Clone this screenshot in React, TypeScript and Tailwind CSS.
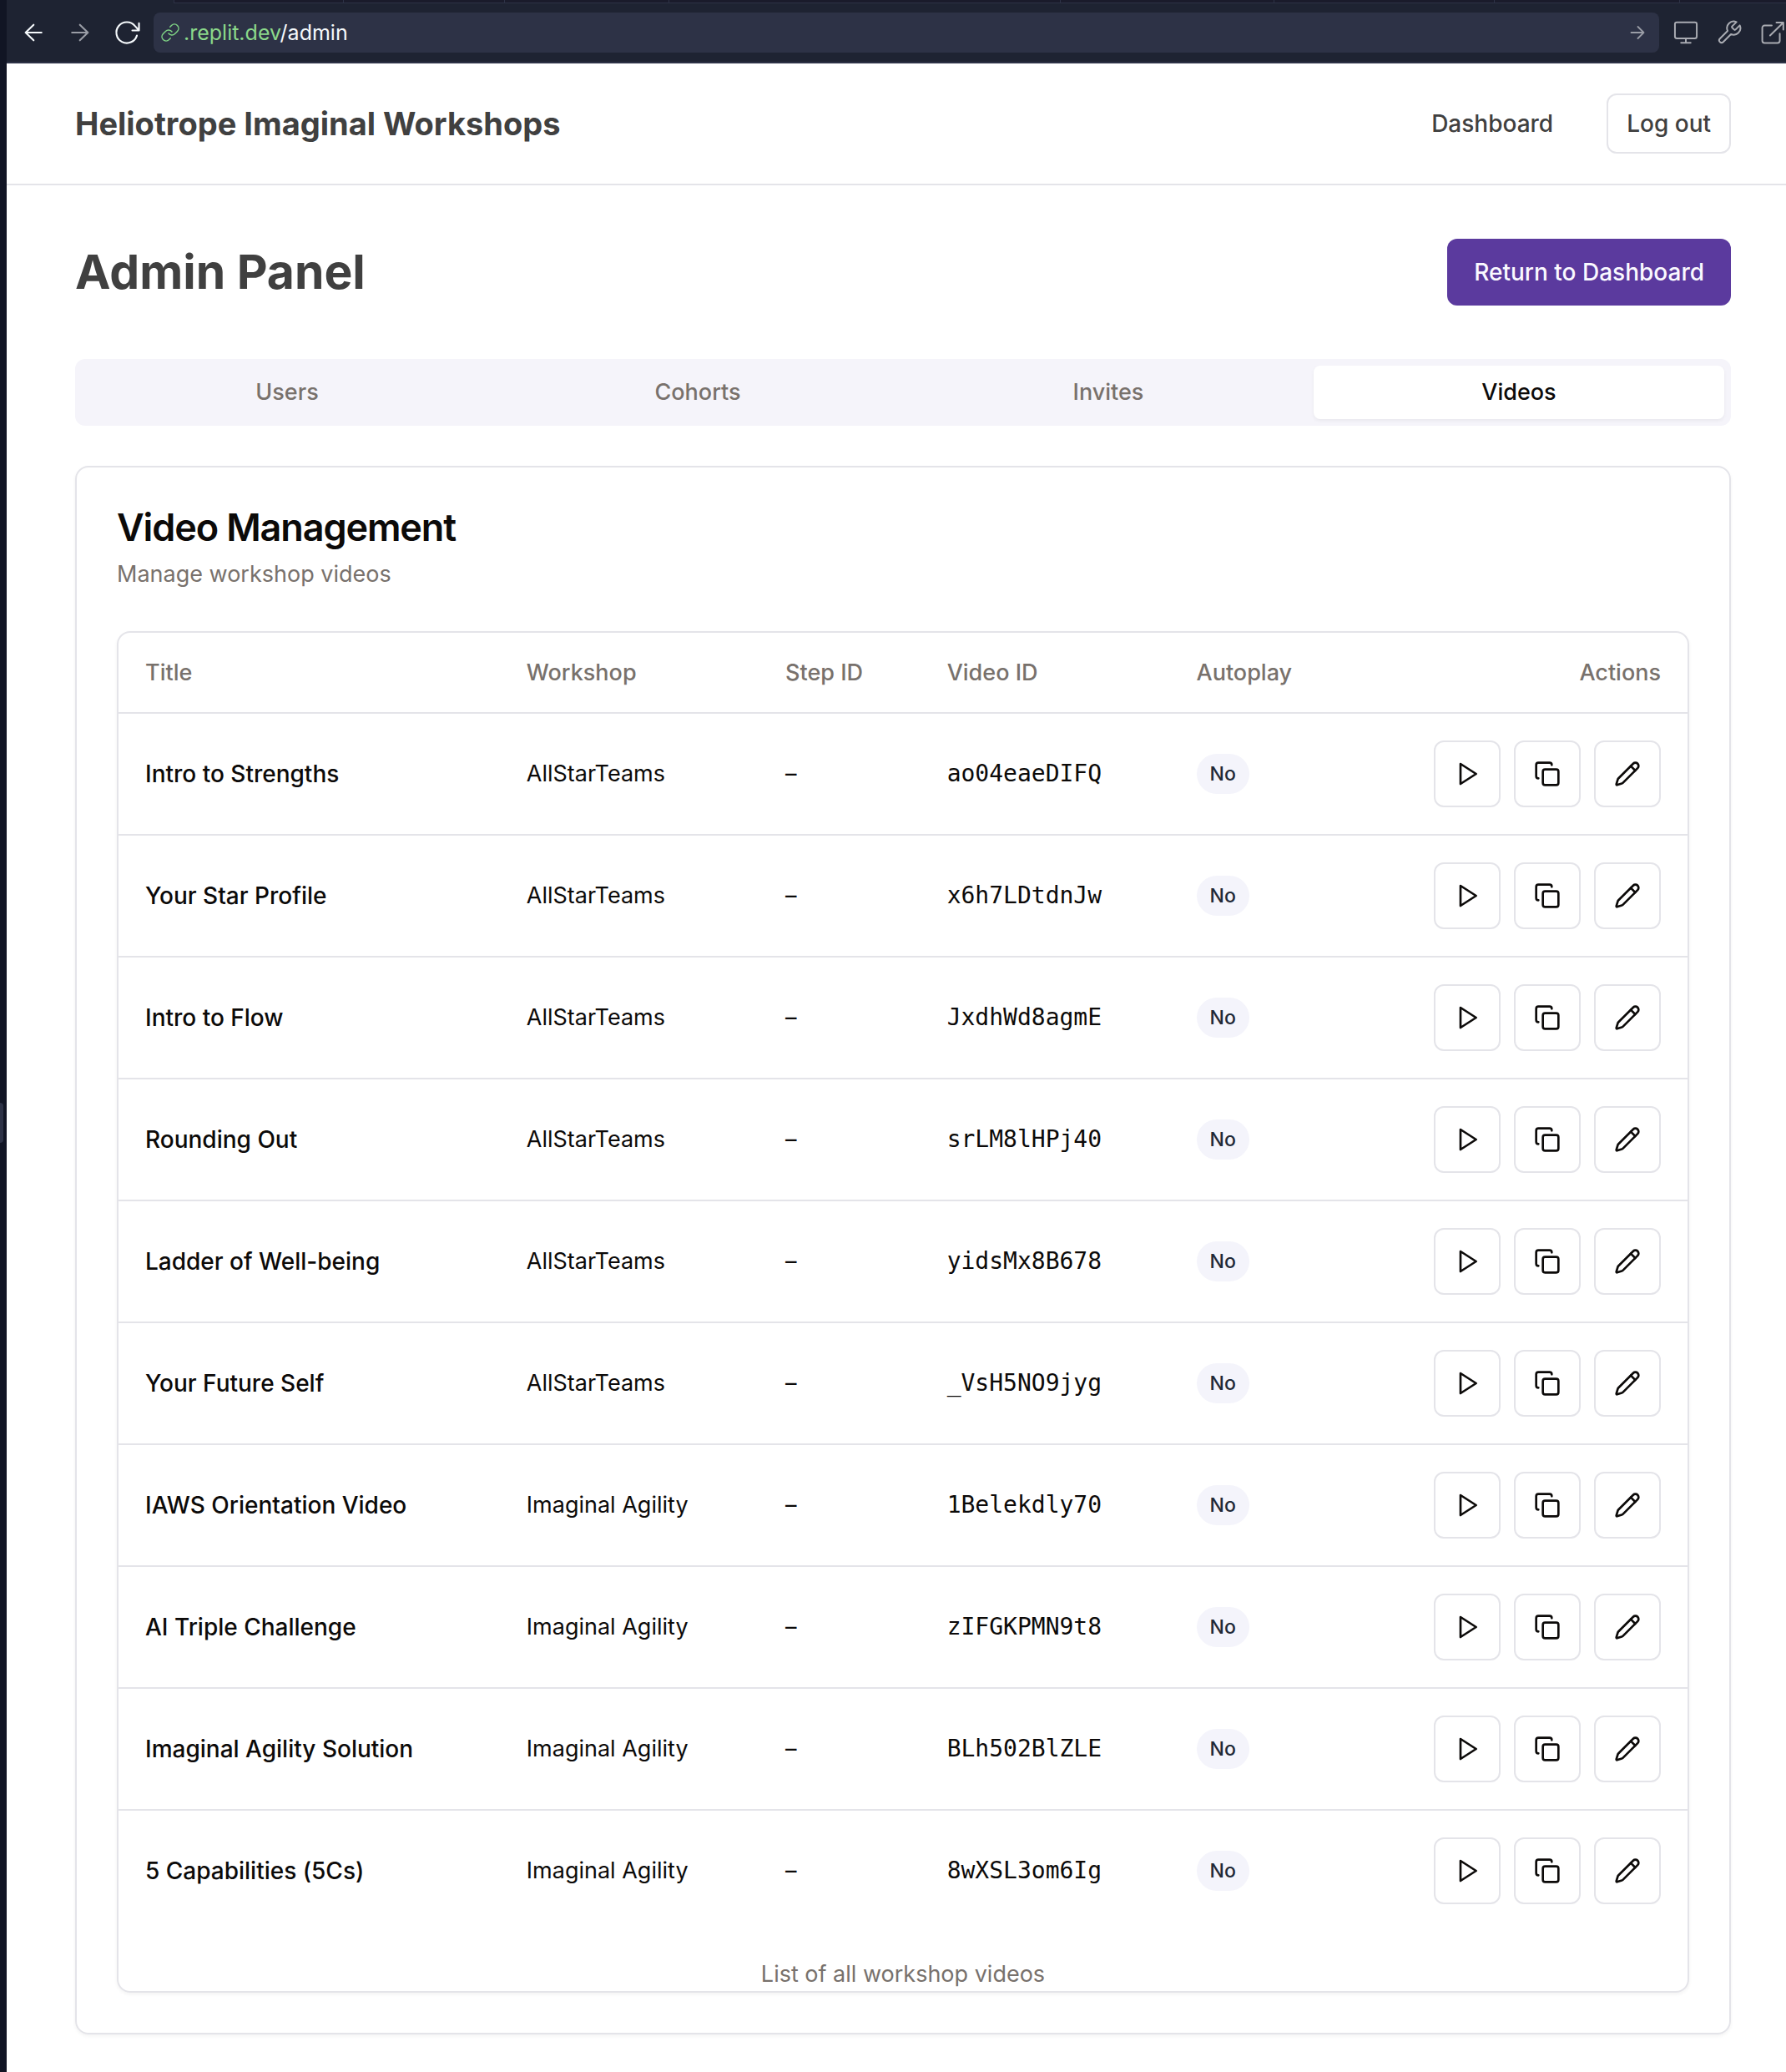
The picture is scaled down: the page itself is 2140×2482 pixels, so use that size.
import React from "react";

type Video = { title: string; workshop: string; id: string };

const videos: Video[] = [
  { title: "Intro to Strengths", workshop: "AllStarTeams", id: "ao04eaeDIFQ" },
  { title: "Your Star Profile", workshop: "AllStarTeams", id: "x6h7LDtdnJw" },
  { title: "Intro to Flow", workshop: "AllStarTeams", id: "JxdhWd8agmE" },
  { title: "Rounding Out", workshop: "AllStarTeams", id: "srLM8lHPj40" },
  { title: "Ladder of Well-being", workshop: "AllStarTeams", id: "yidsMx8B678" },
  { title: "Your Future Self", workshop: "AllStarTeams", id: "_VsH5NO9jyg" },
  { title: "IAWS Orientation Video", workshop: "Imaginal Agility", id: "1Belekdly70" },
  { title: "AI Triple Challenge", workshop: "Imaginal Agility", id: "zIFGKPMN9t8" },
  { title: "Imaginal Agility Solution", workshop: "Imaginal Agility", id: "BLh502BlZLE" },
  { title: "5 Capabilities (5Cs)", workshop: "Imaginal Agility", id: "8wXSL3om6Ig" },
];

const tabs = ["Users", "Cohorts", "Invites", "Videos"];

function Icon({ className, stroke = 2, children }: { className: string; stroke?: number; children: React.ReactNode }) {
  return (
    <svg
      viewBox="0 0 24 24"
      fill="none"
      stroke="currentColor"
      strokeWidth={stroke}
      strokeLinecap="round"
      strokeLinejoin="round"
      className={className}
      aria-hidden="true"
    >
      {children}
    </svg>
  );
}

function BrowserBar() {
  return (
    <div className="border-b-2 border-[#2d3246] bg-[#1e2332]">
      <div className="ml-[200px] flex h-1 divide-x divide-[#2d3246] border-b border-l border-[#2d3246] bg-[#1a1b2b]">
        <div className="w-[203px]" />
        <div className="w-[193px]" />
        <div className="w-[197px]" />
        <div className="w-[469px]" />
        <div className="w-[256px]" />
        <div className="w-[264px]" />
        <div className="w-[222px]" />
        <div className="flex-1" />
      </div>
      <div className="flex h-[70px] items-center pl-4 text-[#f5f9fc]">
        <button aria-label="Back" className="flex size-8 items-center justify-center">
          <Icon className="size-8" stroke={1.6}><path d="M19.300 12H5M12.200 5 5 12l7.200 7" /></Icon>
        </button>
        <button aria-label="Forward" className="ml-6 flex size-8 items-center justify-center text-[#9a9da6]">
          <Icon className="size-8" stroke={1.6}><path d="M4.700 12H19M11.800 5 19 12l-7.200 7" /></Icon>
        </button>
        <button aria-label="Reload" className="ml-6 flex size-8 items-center justify-center">
          <Icon className="size-8" stroke={1.6}>
            <path d="M22.900 3.700v6.400h-6M22.600 9.800 19.300 6.100A9.400 9.400 0 1 0 21 14.700" />
          </Icon>
        </button>
        <div className="ml-4 flex h-12 min-w-0 flex-1 items-center rounded-lg bg-[#2d3246] pr-3.5 pl-2">
          <Icon className="size-6 text-[#7fd485]" stroke={1.5}>
            <path d="M10 13a5 5 0 0 0 7.540.540l3-3a5 5 0 0 0-7.070-7.070l-1.720 1.710" />
            <path d="M14 11a5 5 0 0 0-7.540-.540l-3 3a5 5 0 0 0 7.070 7.070l1.710-1.710" />
          </Icon>
          <span className="ml-1 text-[25px] leading-8">
            <span className="text-[#8bd98a]">.replit.dev</span>/admin
          </span>
          <button aria-label="Go" className="ml-auto text-[#9a9da6]">
            <Icon className="size-6" stroke={1.8}><path d="M4.500 12h15M12.500 5l7 7-7 7" /></Icon>
          </button>
        </div>
        <div className="flex items-center gap-5 pl-4 text-[#a9abb2]">
          <button aria-label="Device">
            <Icon className="size-8" stroke={1.5}><rect x="2.2" y="2.8" width="19.6" height="14.400" rx="1.6" /><path d="M7.700 21.200h8.600M12 17.200v4" /></Icon>
          </button>
          <button aria-label="Tools">
            <Icon className="size-8" stroke={1.5}>
              <path d="M14.700 6.300a1 1 0 0 0 0 1.400l1.600 1.600a1 1 0 0 0 1.400 0l3.770-3.770a6 6 0 0 1-7.940 7.940l-6.910 6.910a2.120 2.120 0 0 1-3-3l6.910-6.910a6 6 0 0 1 7.940-7.940z" />
            </Icon>
          </button>
          <button aria-label="Open in new tab">
            <Icon className="size-8" stroke={1.5}>
              <path d="M18.400 13v6.400a2 2 0 0 1-2 2H4.700a2 2 0 0 1-2-2V7.700a2 2 0 0 1 2-2h6.500M15.400 3h6.200v6.300M9.700 14.600 21.600 3" />
            </Icon>
          </button>
        </div>
      </div>
    </div>
  );
}

function ActionButton({ label, children }: { label: string; children: React.ReactNode }) {
  return (
    <button
      aria-label={label}
      className="flex size-20 items-center justify-center rounded-xl border-2 border-[#e4e4e9] bg-white text-[#0c0a09]"
    >
      <Icon className="size-8">{children}</Icon>
    </button>
  );
}

function VideoTable() {
  const cell = "border-b-2 border-[#e4e4e9] px-8";
  const head = "h-[97px] border-b-2 border-[#e4e4e9] px-8 text-left font-medium text-[#78716c]";
  return (
    <div className="rounded-2xl border-2 border-[#e4e4e9] shadow-[0_2px_4px_rgba(0,0,0,0.05)]">
      <table className="w-full table-fixed border-separate border-spacing-0">
        <caption className="mt-8 caption-bottom leading-10 text-[#78716c]">List of all workshop videos</caption>
        <thead>
          <tr>
            <th className={head + " w-[24.3%]"}>Title</th>
            <th className={head + " w-[16.5%]"}>Workshop</th>
            <th className={head + " w-[10.3%]"}>Step ID</th>
            <th className={head + " w-[15.9%]"}>Video ID</th>
            <th className={head + " w-[12%]"}>Autoplay</th>
            <th className="h-[97px] border-b-2 border-[#e4e4e9] px-8 text-right font-medium text-[#78716c]">Actions</th>
          </tr>
        </thead>
        <tbody className="[&>tr:last-child>td]:border-b-0">
          {videos.map((v) => (
            <tr key={v.id}>
              <td className={cell + " text-[28px] font-medium"}>{v.title}</td>
              <td className={cell}>{v.workshop}</td>
              <td className={cell}>–</td>
              <td className={cell + " font-['DejaVu_Sans_Mono',monospace] text-[28px]"}>{v.id}</td>
              <td className={cell}>
                <span className="inline-flex h-12 items-center rounded-full bg-[#f4f4fb] px-4 align-middle text-[23px] leading-8 font-medium text-[#1f2937]">
                  No
                </span>
              </td>
              <td className={cell + " py-8"}>
                <div className="flex justify-end gap-4">
                  <ActionButton label={"Play " + v.title}>
                    <polygon points="6 3 20 12 6 21 6 3" />
                  </ActionButton>
                  <ActionButton label={"Copy " + v.title}>
                    <rect width="14" height="14" x="8" y="8" rx="2" ry="2" />
                    <path d="M4 16c-1.100 0-2-.9-2-2V4c0-1.100.9-2 2-2h10c1.100 0 2 .9 2 2" />
                  </ActionButton>
                  <ActionButton label={"Edit " + v.title}>
                    <path d="M21.174 6.812a1 1 0 0 0-3.986-3.987L3.842 16.174a2 2 0 0 0-.5.830l-1.321 4.352a.5.5 0 0 0 .623.622l4.353-1.320a2 2 0 0 0 .830-.497z" />
                    <path d="m15 5 4 4" />
                  </ActionButton>
                </div>
              </td>
            </tr>
          ))}
        </tbody>
      </table>
    </div>
  );
}

export default function App() {
  return (
    <div className="flex min-h-screen bg-white font-['Inter',sans-serif] text-[27px] leading-10 text-[#0c0a09]">
      <div className="flex w-2 shrink-0 items-center bg-[#111524]">
        <div className="mt-52 h-12 w-1 rounded-r-sm bg-[#2d3246]" />
      </div>
      <div className="min-w-0 flex-1">
        <BrowserBar />
        <header className="flex items-center justify-between border-b-2 border-[#e4e4e9] py-9 pr-[66px] pl-[82px] text-[#404040]">
          <h1 className="text-[38px] leading-14 font-bold">Heliotrope Imaginal Workshops</h1>
          <nav className="flex items-center gap-16 text-[28px] font-medium">
            <a href="#dashboard">Dashboard</a>
            <button className="h-18 rounded-xl border-2 border-[#e4e4e9] px-[22px]">Log out</button>
          </nav>
        </header>
        <main className="pt-16 pr-[66px] pb-11 pl-[82px]">
          <div className="flex items-center justify-between">
            <h2 className="text-[57px] leading-18 font-bold text-[#404040]">Admin Panel</h2>
            <button className="h-20 rounded-xl bg-[#5b3a9e] px-8 text-[28px] font-medium text-[#faf9ff]">Return to Dashboard</button>
          </div>
          <div role="tablist" className="mt-16 grid h-20 grid-cols-4 rounded-xl bg-[#f5f4fa] p-2 font-medium text-[#78716c]">
            {tabs.map((t) => (
              <button
                key={t}
                role="tab"
                aria-selected={t === "Videos"}
                className="rounded-lg aria-selected:bg-white aria-selected:text-[#0c0a09] aria-selected:shadow-[0_2px_4px_rgba(0,0,0,0.05)]"
              >
                {t}
              </button>
            ))}
          </div>
          <section className="mt-12 rounded-2xl border-2 border-[#e4e4e9] p-12 shadow-[0_2px_4px_rgba(0,0,0,0.05)]">
            <h3 className="text-[45px] leading-12 font-semibold tracking-tight">Video Management</h3>
            <p className="mt-3 mb-12 text-[#78716c]">Manage workshop videos</p>
            <VideoTable />
          </section>
        </main>
      </div>
    </div>
  );
}
